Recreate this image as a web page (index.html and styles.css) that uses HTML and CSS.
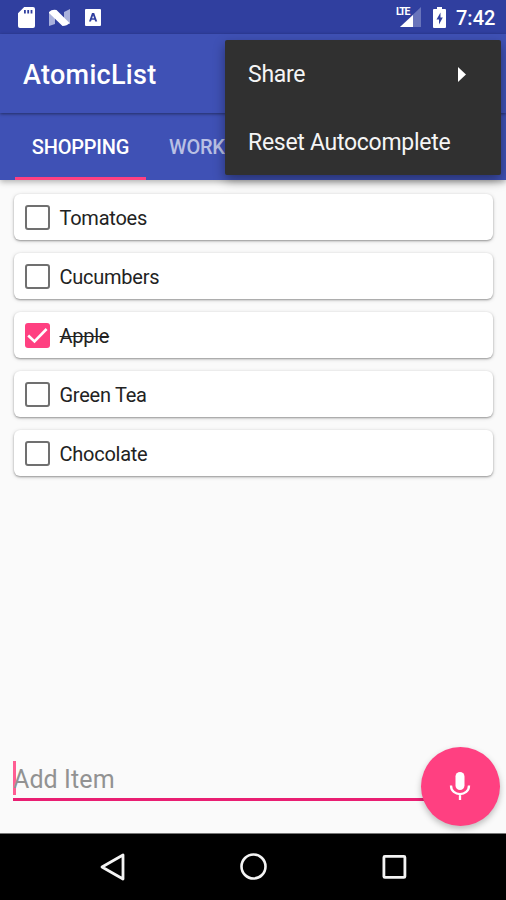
FILE: index.html
```html
<!DOCTYPE html>
<html lang="en">
<head>
<meta charset="utf-8">
<title>AtomicList</title>
<link rel="stylesheet" href="styles.css">
</head>
<body>
<div class="screen">
  <header class="status">
    <svg class="sd" width="17" height="21" viewBox="0 0 17 21"><path fill="#fff" fill-rule="evenodd" d="M6.2 0H15Q17 0 17 2V19Q17 21 15 21H2Q0 21 0 19V6.3ZM6 3V6.5H7.8V3ZM9.3 3V6.5H11.1V3ZM12.6 3V6.5H14.4V3Z"/></svg>
    <svg class="nougat" width="21" height="18" viewBox="0 0 21 18"><path fill="#a9b1dc" d="M0 3L6 5V15L0 17ZM15 3L21 0V15L15 13Z"/><path fill="#fff" d="M0 3Q3 0 7.5 1L20.5 14Q18 17 13.5 17L0 4Z"/></svg>
    <svg class="a-badge" width="16" height="17" viewBox="0 0 16 17"><path fill="#fff" fill-rule="evenodd" d="M1 0H15Q16 0 16 1V16Q16 17 15 17H1Q0 17 0 16V1Q0 0 1 0ZM7 4L4 12.5H6L6.6 10.8H9.6L10.2 12.5H12.2L9.2 4ZM8.1 6.4L9.1 9.3H7.1Z"/></svg>
    <span class="spacer"></span>
    <div class="signal">
      <svg width="21" height="20" viewBox="0 0 21 20"><path fill="#6974bb" d="M21 0V20H0Z"/><path fill="#fff" d="M13 8V20H0Z"/></svg>
      <span class="lte">LTE</span>
    </div>
    <svg class="battery" width="13" height="21" viewBox="0 0 13 21"><path fill="#fff" fill-rule="evenodd" d="M4 0H9V2H12Q13 2 13 3V20Q13 21 12 21H1Q0 21 0 20V3Q0 2 1 2H4ZM7.5 5.5L3.5 12.5H6V17.5L9.8 10.5H7.5Z"/></svg>
    <span class="clock">7:42</span>
  </header>
  <div class="appbar"><h1>AtomicList</h1></div>
  <nav class="tabs">
    <div class="tab active"><span>SHOPPING</span></div>
    <div class="tab"><span>WORK</span></div>
  </nav>
  <main class="content">
    <ul class="list">
      <li class="card"><span class="box"></span><span class="label">Tomatoes</span></li>
      <li class="card"><span class="box"></span><span class="label">Cucumbers</span></li>
      <li class="card"><span class="box checked"><svg width="25" height="25" viewBox="0 0 25 25"><path d="M3.2 12.5L9.5 18.5L21.6 6" fill="none" stroke="#fff" stroke-width="2.6"/></svg></span><span class="label done">Apple</span></li>
      <li class="card"><span class="box"></span><span class="label">Green Tea</span></li>
      <li class="card"><span class="box"></span><span class="label">Chocolate</span></li>
    </ul>
    <div class="entry"><span class="caret"></span><span class="hint">Add Item</span></div>
    <div class="fab"><svg width="22" height="30" viewBox="0 0 22 30"><rect x="6.5" y="1" width="9" height="18" rx="4.5" fill="#fff"/><path d="M2 14.5C2 26 20 26 20 14.5M11 23V29" fill="none" stroke="#fff" stroke-width="2.3"/></svg></div>
  </main>
  <footer class="navbar">
    <svg width="28" height="30" viewBox="0 0 28 30"><path d="M25 3V27L4 15Z" fill="none" stroke="#f4f4f4" stroke-width="2.8" stroke-linejoin="round"/></svg>
    <svg width="28" height="30" viewBox="0 0 28 30"><circle cx="14.5" cy="14.5" r="12" fill="none" stroke="#f4f4f4" stroke-width="2.6"/></svg>
    <svg width="28" height="30" viewBox="0 0 28 30"><rect x="3.9" y="4.4" width="21" height="21" rx="1" fill="none" stroke="#f4f4f4" stroke-width="2.8"/></svg>
  </footer>
  <div class="menu">
    <div class="menu-item"><span class="share">Share</span><svg width="8" height="15" viewBox="0 0 8 15"><path fill="#fff" d="M0 0L8 7.5L0 15Z"/></svg></div>
    <div class="menu-item reset"><span>Reset Autocomplete</span></div>
  </div>
</div>
</body>
</html>
```
FILE: styles.css
```css
* { box-sizing: border-box; }
body { margin: 0; font-family: Roboto, "Liberation Sans", sans-serif; }
svg { display: block; flex: none; }
.screen { position: relative; width: 506px; height: 900px; display: flex; flex-direction: column; background: #fafafa; overflow: hidden; }
.status { height: 34px; flex: none; display: flex; align-items: flex-start; background: #303f9f; padding: 7px 11px 0 18px; }
.nougat { margin: 2px 0 0 14px; }
.a-badge { margin: 2px 0 0 15px; }
.spacer { flex: 1; }
.signal { position: relative; margin-right: 12px; }
.lte { position: absolute; left: -4px; top: 0; padding-right: 1px; background: #303f9f; color: #fff; font-size: 10.5px; line-height: 10px; font-weight: 700; letter-spacing: -1.3px; }
.battery { margin-right: 10px; }
.clock { width: 39px; color: #fff; font-size: 20px; line-height: 22px; font-weight: 500; white-space: nowrap; }
.appbar { height: 79px; flex: none; display: flex; align-items: center; padding: 3px 23px 0; background: #3f51b5; z-index: 2; box-shadow: 0 1px 3px rgba(0,0,0,.45); }
h1 { margin: 0; color: #fff; font-size: 27px; line-height: 32px; font-weight: 500; letter-spacing: .3px; }
.tabs { height: 67px; flex: none; display: flex; padding-left: 15px; background: #3f51b5; box-shadow: 0 2px 6px rgba(0,0,0,.3); z-index: 1; }
.tab { display: flex; align-items: center; justify-content: center; color: #b9c0e4; font-size: 20px; font-weight: 500; line-height: 24px; letter-spacing: -.2px; padding: 1px 23px 0; }
.tab.active { width: 131px; padding: 4px 0 0; color: #fff; border-bottom: 3px solid #ff4081; }
.content { flex: 1; position: relative; display: flex; flex-direction: column; padding: 14px 13px 0 14px; }
.list { margin: 0; padding: 0; list-style: none; display: flex; flex-direction: column; gap: 13px; }
.card { height: 46px; display: flex; align-items: center; gap: 10px; padding-left: 10.5px; border-radius: 6px; background: #fff; box-shadow: 0 1px 2px rgba(0,0,0,.32), 0 1px 4px rgba(0,0,0,.16); }
.box { width: 25px; height: 25px; border: 2.5px solid #707070; border-radius: 3px; }
.box.checked { border: 0; background: #ff4081; }
.label { color: #222; font-size: 20px; line-height: 24px; letter-spacing: -.25px; padding-top: 1px; }
.done { text-decoration: line-through; text-decoration-thickness: 1px; }
.entry { display: flex; align-items: center; height: 44px; margin: auto 0 32px -1px; border-bottom: 3px solid #e91e72; }
.caret { width: 3px; height: 34px; margin-right: -3px; background: #ff5d93; }
.hint { color: #929292; font-size: 25px; line-height: 32px; padding-top: 4px; letter-spacing: .1px; }
.fab { position: absolute; right: 6px; bottom: 7px; width: 79px; height: 79px; border-radius: 50%; display: flex; align-items: center; justify-content: center; background: #ff4081; box-shadow: 0 3px 6px rgba(0,0,0,.25); }
.fab svg { margin: -2px 1px 0 0; }
.navbar { height: 67px; flex: none; display: flex; justify-content: center; align-items: center; gap: 113px; background: #000; border-top: 1px solid #777; }
.menu { position: absolute; left: 225px; top: 40px; width: 276px; height: 135px; z-index: 3; border-radius: 2px; background: #303030; color: #f5f5f5; box-shadow: 0 5px 12px rgba(0,0,0,.38); font-size: 23px; line-height: 28px; letter-spacing: -.28px; }
.menu-item { height: 67px; display: flex; align-items: center; justify-content: space-between; padding: 2px 35px 0 23px; white-space: nowrap; }
.menu-item.reset { padding-top: 4px; }
```
